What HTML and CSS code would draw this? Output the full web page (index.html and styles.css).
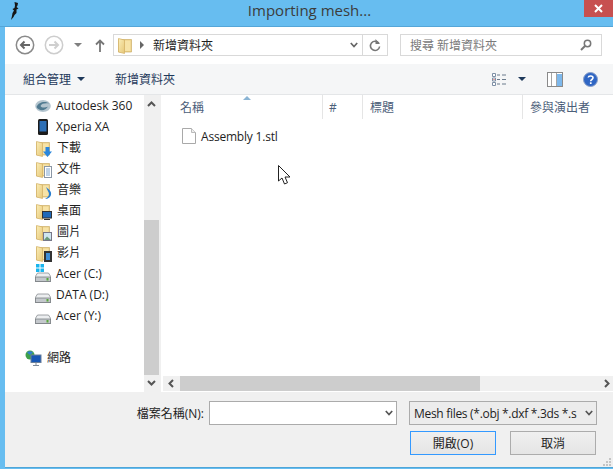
FILE: index.html
```html
<!DOCTYPE html>
<html lang="zh-Hant">
    <head>
        <meta charset="utf-8">
        <title>Importing mesh...</title>
        <link rel="stylesheet" href="styles.css">
    </head>
    <body>
        <svg class="defs" width="0" height="0">
            <defs>
                <linearGradient id="fold" x1="0" y1="0" x2="1" y2="1">
                    <stop offset="0" stop-color="#fbeeb8"/>
                    <stop offset="1" stop-color="#e6c777"/>
                </linearGradient>
                <symbol id="folder" viewBox="0 0 16 17">
                    <path d="M1.500 2.500H14.500V15H1.500z" fill="#eccf86" stroke="#cdaf68" stroke-width=".7"/>
                    <path d="M8 3.500h5.500V14H8z" fill="#f7e3a6"/>
                    <path d="M1.500 1.500 7.500 3V16.500L1.500 15z" fill="url(#fold)" stroke="#d2b066" stroke-width=".7"/>
                </symbol>
                <symbol id="drive" viewBox="0 0 16 10">
                    <path d="M2.500 1h11L16 5v4.500H0V5z" fill="#eceef0" stroke="#7b7f84" stroke-width=".7"/>
                    <path d="M.5 5h15v4.500H.5z" fill="#c4c8cc" stroke="#6f7377" stroke-width=".7"/>
                    <rect x="11.500" y="6" width="2" height="2.500" fill="#5aa83c"/>
                </symbol>
            </defs>
        </svg>
        <div class="window">
            <header class="titlebar">
                <svg class="app-icon" width="8" height="18" viewBox="0 0 8 18">
                    <path d="M3.500 0 7 1 6.500 3.500 5.500 5 7.500 6.500 5.500 7.500 5.500 11 3.500 13 2.500 15 0 18 1 14 1.500 11 3 8.500 1.500 7 3.500 6 4 3.500z" fill="#161616"/>
                </svg>
                <span class="title">Importing mesh...</span>
                <button class="close" type="button">
                    <svg width="9" height="9" viewBox="0 0 9 9"><path d="M1 1l7 7M8 1 1 8" stroke="#fff" stroke-width="2"/></svg>
                </button>
            </header>
            <div class="dialog">
                <div class="navbar">
                    <svg class="nav-back" width="20" height="20" viewBox="0 0 20 20">
                        <circle cx="10" cy="10" r="8.700" fill="#fff" stroke="#8a8a8a" stroke-width="1.500"/>
                        <path d="M15 10H6M9.500 6.500 6 10l3.500 3.500" fill="none" stroke="#666" stroke-width="2"/>
                    </svg>
                    <svg class="nav-forward" width="20" height="20" viewBox="0 0 20 20">
                        <circle cx="10" cy="10" r="8.700" fill="#fff" stroke="#cdcdcd" stroke-width="1.500"/>
                        <path d="M5 10h9M10.500 6.500 14 10l-3.500 3.500" fill="none" stroke="#cfcfcf" stroke-width="2"/>
                    </svg>
                    <span class="tri-grey"></span>
                    <svg class="nav-up" width="10" height="13" viewBox="0 0 10 13">
                        <path d="M5 13V2M1 5.500 5 1.500l4 4" fill="none" stroke="#777" stroke-width="1.800"/>
                    </svg>
                    <div class="address">
                        <svg class="addr-folder" width="16" height="17"><use href="#folder"/></svg>
                        <span class="tri-right"></span>
                        <span class="addr-text">新增資料夾</span>
                        <svg class="addr-chev" width="8" height="6" viewBox="0 0 8 6"><path d="M.8 1 4 4.500 7.200 1" fill="none" stroke="#666" stroke-width="1.700"/></svg>
                        <span class="refresh">
                            <svg width="12" height="13" viewBox="0 0 12 13">
                                <path d="M9.800 4.200A4.600 4.600 0 1 0 10.600 7.500" fill="none" stroke="#777" stroke-width="1.600"/>
                                <path d="M6.500 0v5h4.500z" fill="#777"/>
                            </svg>
                        </span>
                    </div>
                    <div class="search">
                        <span>搜尋 新增資料夾</span>
                        <svg width="12" height="12" viewBox="0 0 12 12">
                            <circle cx="7.500" cy="4.500" r="3.200" fill="none" stroke="#777" stroke-width="1.500"/>
                            <path d="M5 7 1 11" stroke="#777" stroke-width="2"/>
                        </svg>
                    </div>
                </div>
                <div class="commands">
                    <span class="cmd">組合管理<i class="tri-down"></i></span>
                    <span class="cmd cmd-new">新增資料夾</span>
                    <span class="spacer"></span>
                    <svg class="cmd-views" width="15" height="13" viewBox="0 0 15 13">
                        <path d="M.5.500h3v3h-3zM.5 5h3v3h-3zM.5 9.500h3v3h-3z" fill="#fff" stroke="#7d8fa5"/>
                        <path d="M5 2h3M10 2h4M5 6.500h3M10 6.500h4M5 11h3M10 11h4" stroke="#6a7a8c"/>
                        <path d="M1.500 6h1v1h-1z" fill="#d44"/>
                    </svg>
                    <i class="tri-down tri-views"></i>
                    <svg class="cmd-pane" width="16" height="15" viewBox="0 0 16 15">
                        <rect x=".5" y=".5" width="15" height="14" fill="#fff" stroke="#8a8a8a"/>
                        <rect x="10" y="2" width="5" height="12" fill="#7db8ec"/>
                        <path d="M4.500 1v13M9.500 1v13" stroke="#a5a5a5"/>
                    </svg>
                    <svg class="cmd-help" width="15" height="15" viewBox="0 0 15 15">
                        <circle cx="7.500" cy="7.500" r="7" fill="#2f66c4" stroke="#8aa0c8"/>
                        <path d="M5.200 5.500C5.500 3.500 10 3.400 10 5.800 10 7.500 7.700 7.500 7.700 9.300" fill="none" stroke="#fff" stroke-width="1.600"/>
                        <rect x="6.900" y="10.300" width="1.700" height="1.700" fill="#fff"/>
                    </svg>
                </div>
                <div class="panes">
                    <nav class="tree">
                        <div class="tree-list">
                            <div class="row">
                                <svg width="16" height="14" viewBox="0 0 16 14">
                                    <ellipse cx="8" cy="7" rx="7.800" ry="6" fill="#b4c5cf"/>
                                    <path d="M1.500 8C4 2 11 2 14.500 4.500 10 4 6.500 4.500 5.500 7 7 9.500 10.500 8.500 13 7.500 10.500 12 4 12.500 1.500 8z" fill="#507a90"/>
                                </svg>
                                <span>Autodesk 360</span>
                            </div>
                            <div class="row">
                                <svg width="16" height="16" viewBox="0 0 16 16">
                                    <rect x="3" y="0" width="10" height="16" rx="1.500" fill="#1c1c1c"/>
                                    <rect x="4.500" y="2" width="7" height="10.500" fill="#2d6fb5"/>
                                </svg>
                                <span>Xperia XA</span>
                            </div>
                            <div class="row">
                                <span class="badge-wrap">
                                    <svg width="16" height="17"><use href="#folder"/></svg>
                                    <svg class="badge" width="9" height="10" viewBox="0 0 9 10"><path d="M2.500 0h4v4.500H9L4.500 10 0 4.500h2.500z" fill="#2a86dc"/></svg>
                                </span>
                                <span class="cjk">下載</span>
                            </div>
                            <div class="row">
                                <span class="badge-wrap">
                                    <svg width="16" height="17"><use href="#folder"/></svg>
                                    <svg class="badge" width="8" height="12" viewBox="0 0 8 12"><rect x=".5" y=".5" width="7" height="11" fill="#fff" stroke="#8b97a5"/><path d="M2 3h4M2 5h4M2 7h4M2 9h4" stroke="#7fa6cf"/></svg>
                                </span>
                                <span class="cjk">文件</span>
                            </div>
                            <div class="row">
                                <span class="badge-wrap">
                                    <svg width="16" height="17"><use href="#folder"/></svg>
                                    <svg class="badge" width="7" height="12" viewBox="0 0 7 12"><path d="M1 0C3 2 7 4 6 8 5.500 10 3 12 0 12 3 10 4 9 4 7 4 5 2 3 1 0z" fill="#2a7fd0"/></svg>
                                </span>
                                <span class="cjk">音樂</span>
                            </div>
                            <div class="row">
                                <span class="badge-wrap">
                                    <svg width="16" height="17"><use href="#folder"/></svg>
                                    <svg class="badge" width="10" height="9" viewBox="0 0 10 9"><rect x=".5" y=".5" width="9" height="6.500" fill="#1f69b8" stroke="#333"/><path d="M2 8.500h6" stroke="#333"/></svg>
                                </span>
                                <span class="cjk">桌面</span>
                            </div>
                            <div class="row">
                                <span class="badge-wrap">
                                    <svg width="16" height="17"><use href="#folder"/></svg>
                                    <svg class="badge" width="9" height="9" viewBox="0 0 9 9"><rect x=".5" y=".5" width="8" height="8" fill="#cfe6f0" stroke="#778"/><path d="M1 8 4 4.500 8 8z" fill="#6a9a7a"/></svg>
                                </span>
                                <span class="cjk">圖片</span>
                            </div>
                            <div class="row">
                                <span class="badge-wrap">
                                    <svg width="16" height="17"><use href="#folder"/></svg>
                                    <svg class="badge" width="8" height="11" viewBox="0 0 8 11"><rect width="8" height="11" fill="#333"/><rect x="2" y="2" width="4" height="7" fill="#3f8fd8"/></svg>
                                </span>
                                <span class="cjk">影片</span>
                            </div>
                            <div class="row">
                                <span class="badge-wrap">
                                    <svg class="drive-low" width="16" height="10"><use href="#drive"/></svg>
                                    <svg class="win" width="8" height="8" viewBox="0 0 8 8"><path d="M0 0h3.500v3.500H0zM4.500 0H8v3.500H4.500zM0 4.500h3.500V8H0zM4.500 4.500H8V8H4.500z" fill="#19b5ee"/></svg>
                                </span>
                                <span>Acer (C:)</span>
                            </div>
                            <div class="row">
                                <svg class="drive-low" width="16" height="10"><use href="#drive"/></svg>
                                <span>DATA (D:)</span>
                            </div>
                            <div class="row">
                                <svg class="drive-low" width="16" height="10"><use href="#drive"/></svg>
                                <span>Acer (Y:)</span>
                            </div>
                            <div class="row row-network">
                                <svg width="17" height="16" viewBox="0 0 17 16">
                                    <circle cx="5" cy="5" r="4.500" fill="#3fa04a"/>
                                    <path d="M2 2.500a4.500 4.500 0 0 1 6 0L5 5z" fill="#2f7fd0"/>
                                    <rect x="6" y="5" width="10" height="7.500" fill="#1757b5" stroke="#6a7f9a"/>
                                    <path d="M11 12.500V15M8 15.500h6" stroke="#7f8a99"/>
                                </svg>
                                <span class="cjk">網路</span>
                            </div>
                        </div>
                        <div class="vscroll">
                            <svg width="9" height="6" viewBox="0 0 9 6"><path d="M1 5 4.500 1.500 8 5" fill="none" stroke="#555" stroke-width="2"/></svg>
                            <span class="v-space"></span>
                            <span class="v-thumb"></span>
                            <svg width="9" height="6" viewBox="0 0 9 6"><path d="M1 1 4.500 4.500 8 1" fill="none" stroke="#555" stroke-width="2"/></svg>
                        </div>
                    </nav>
                    <main class="files">
                        <div class="columns">
                            <span class="col col-name">名稱<i class="sort"></i></span>
                            <span class="col col-num">#</span>
                            <span class="col col-title">標題</span>
                            <span class="col col-artist">參與演出者</span>
                        </div>
                        <div class="file-list">
                            <div class="file">
                                <svg width="14" height="16" viewBox="0 0 14 16">
                                    <path d="M.5.500H9.500L13.500 4.500V15.500H.5z" fill="#fff" stroke="#a9a9a9"/>
                                    <path d="M9.500.500V4.500H13.500" fill="#eee" stroke="#bbb"/>
                                </svg>
                                <span class="file-name">Assembly 1.stl</span>
                            </div>
                        </div>
                        <div class="hscroll">
                            <svg class="h-left" width="6" height="9" viewBox="0 0 6 9"><path d="M5 1 1.500 4.500 5 8" fill="none" stroke="#555" stroke-width="2"/></svg>
                            <span class="h-thumb"></span>
                            <svg class="h-right" width="6" height="9" viewBox="0 0 6 9"><path d="M1 1 4.500 4.500 1 8" fill="none" stroke="#555" stroke-width="2"/></svg>
                        </div>
                    </main>
                </div>
                <footer class="bottom">
                    <div class="name-row">
                        <label class="name-label">檔案名稱(N):</label>
                        <div class="combo">
                            <svg width="8" height="6" viewBox="0 0 8 6"><path d="M.8 1 4 4.500 7.200 1" fill="none" stroke="#555" stroke-width="1.700"/></svg>
                        </div>
                        <div class="filter">
                            <span class="filter-text">Mesh files (*.obj *.dxf *.3ds *.s</span>
                            <svg width="8" height="6" viewBox="0 0 8 6"><path d="M.8 1 4 4.500 7.200 1" fill="none" stroke="#555" stroke-width="1.700"/></svg>
                        </div>
                    </div>
                    <div class="button-row">
                        <button class="btn btn-default" type="button">開啟(O)</button>
                        <button class="btn" type="button">取消</button>
                    </div>
                    <svg class="grip" width="10" height="10" viewBox="0 0 10 10">
                        <path d="M7 1h2v2H7zM4 4h2v2H4zM7 4h2v2H7zM1 7h2v2H1zM4 7h2v2H4zM7 7h2v2H7z" fill="#c4c4c4"/>
                    </svg>
                </footer>
            </div>
            <svg class="cursor" width="13" height="20" viewBox="0 0 13 20">
                <path d="M.5.500V16L4 13l2.500 6 3-1.300L7 12h5z" fill="#fff" stroke="#222"/>
            </svg>
        </div>
    </body>
</html>
```

FILE: styles.css
```css
* {
    box-sizing: border-box;
}
body {
    margin: 0;
    font-family: "Open Sans", "Noto Sans CJK TC", sans-serif;
    font-size: 12px;
    color: #1e1e1e;
}
.defs {
    position: absolute;
}
.window {
    position: relative;
    width: 613px;
    height: 469px;
    display: flex;
    flex-direction: column;
    background: #67bdf0;
    padding: 0 0 1px 5px;
    overflow: hidden;
}
.titlebar {
    height: 27px;
    margin-left: -5px;
    padding-left: 6px;
    flex: none;
    display: flex;
    align-items: flex-start;
    justify-content: center;
    position: relative;
    border-bottom: 1px solid #55a6d8;
}
.app-icon {
    position: absolute;
    left: 11px;
    top: 2px;
}
.title {
    font-size: 15px;
    line-height: 21px;
    color: #3c3c3c;
}
.close {
    position: absolute;
    right: 0;
    top: 0;
    width: 29px;
    height: 17px;
    border: 0;
    padding: 0;
    background: #c75050;
    display: flex;
    align-items: center;
    justify-content: center;
}
.dialog {
    flex: 1;
    min-height: 0;
    display: flex;
    flex-direction: column;
    background: #f0f0f0;
    border-bottom: 1px solid #4fa6d8;
}

/* address + search */
.navbar {
    height: 37px;
    flex: none;
    background: #fff;
    display: flex;
    align-items: center;
    padding: 0 0 1px 10px;
}
.nav-forward {
    margin-left: 9px;
}
.tri-grey {
    margin-left: 10px;
    border: 4px solid transparent;
    border-top-color: #808080;
    border-bottom: 0;
}
.nav-up {
    margin-left: 13px;
}
.address {
    margin-left: 8px;
    width: 275px;
    height: 22px;
    display: flex;
    align-items: center;
    border: 1px solid #d9d9d9;
    padding-left: 3px;
}
.addr-folder {
    flex: none;
}
.tri-right {
    margin-left: 7px;
    border: 4px solid transparent;
    border-left-color: #666;
    border-right: 0;
}
.addr-text {
    margin-left: 9px;
    flex: 1;
}
.addr-chev {
    margin-right: 4px;
}
.refresh {
    width: 25px;
    height: 20px;
    border-left: 1px solid #d9d9d9;
    display: flex;
    align-items: center;
    justify-content: center;
}
.search {
    margin-left: 12px;
    width: 202px;
    height: 22px;
    border: 1px solid #d9d9d9;
    display: flex;
    align-items: center;
    justify-content: space-between;
    padding: 0 9px;
    color: #7a7a7a;
}

/* command bar */
.commands {
    height: 31px;
    flex: none;
    background: #f5f6f7;
    border-bottom: 1px solid #e4e6e8;
    display: flex;
    align-items: center;
    padding-right: 15px;
}
.cmd {
    margin-left: 18px;
    color: #1e395b;
    display: flex;
    align-items: center;
}
.cmd-new {
    margin-left: 30px;
}
.tri-down {
    margin-left: 6px;
    border: 4px solid transparent;
    border-top: 4px solid #1e395b;
    border-bottom: 0;
}
.spacer {
    flex: 1;
}
.tri-views {
    margin-left: 11px;
}
.cmd-pane {
    margin-left: 21px;
}
.cmd-help {
    margin-left: 20px;
}

/* left tree */
.panes {
    height: 297px;
    flex: none;
    display: flex;
    background: #fff;
}
.tree {
    width: 156px;
    flex: none;
    display: flex;
    border-right: 2px solid #f0f0f0;
}
.tree-list {
    flex: 1;
    padding-left: 30px;
}
.row {
    height: 21px;
    display: flex;
    align-items: center;
    gap: 5px;
    white-space: nowrap;
}
.row svg {
    flex: none;
}
.row .cjk {
    margin: 0 0 2px 1px;
}
.row-network {
    margin: 21px 0 0 -10px;
}
.row-network .cjk {
    margin-left: 0;
}
.badge-wrap {
    position: relative;
    width: 16px;
    height: 16px;
    display: block;
    flex: none;
}
.badge {
    position: absolute;
    right: -1px;
    bottom: -1px;
}
.win {
    position: absolute;
    left: 1px;
    top: -2px;
}
.drive-low {
    display: block;
    margin-top: 6px;
}
.vscroll {
    width: 15px;
    flex: none;
    background: #f0f0f0;
    display: flex;
    flex-direction: column;
    align-items: center;
    padding: 6px 0;
}
.v-space {
    height: 113px;
}
.v-thumb {
    flex: 1;
    align-self: stretch;
    background: #cdcdcd;
    margin-bottom: 5px;
}

/* file list */
.files {
    flex: 1;
    min-width: 0;
    display: flex;
    flex-direction: column;
}
.columns {
    height: 24px;
    flex: none;
    display: flex;
    color: #4c607a;
    line-height: 25px;
}
.col {
    position: relative;
    border-right: 1px solid #e5e5e5;
    white-space: nowrap;
}
.col-name {
    width: 162px;
    padding-left: 19px;
}
.col-num {
    width: 40px;
    padding-left: 6px;
}
.col-title {
    width: 160px;
    padding-left: 7px;
}
.col-artist {
    flex: 1;
    padding-left: 7px;
    border-right: 0;
}
.sort {
    position: absolute;
    left: 82px;
    top: 1px;
    border: 4px solid transparent;
    border-bottom-color: #8ab4d4;
    border-top: 0;
}
.file-list {
    flex: 1;
    padding: 8px 0 0 21px;
}
.file {
    display: flex;
    align-items: center;
    gap: 5px;
    height: 18px;
    white-space: nowrap;
}
.file-name {
    letter-spacing: -.2px;
}
.hscroll {
    height: 15px;
    flex: none;
    margin: 0 0 1px 2px;
    background: #f0f0f0;
    display: flex;
    align-items: center;
    padding-right: 3px;
}
.h-left {
    margin: 0 6px 0 5px;
}
.h-thumb {
    width: 300px;
    height: 15px;
    background: #cdcdcd;
}
.h-right {
    margin-left: auto;
}

/* bottom panel */
.bottom {
    flex: 1;
    position: relative;
    padding: 9px 16px 0 0;
}
.name-row {
    display: flex;
    align-items: center;
    height: 24px;
}
.name-label {
    width: 199px;
    text-align: right;
    white-space: nowrap;
}
.combo {
    margin-left: 5px;
    width: 188px;
    height: 24px;
    background: #fff;
    border: 1px solid #ababab;
    display: flex;
    align-items: center;
    justify-content: flex-end;
    padding-right: 3px;
}
.filter {
    margin-left: 12px;
    width: 188px;
    height: 24px;
    background: #ececec;
    border: 1px solid #ababab;
    display: flex;
    align-items: center;
    justify-content: space-between;
    padding: 0 3px 0 4px;
}
.filter-text {
    white-space: nowrap;
    letter-spacing: -.3px;
}
.button-row {
    display: flex;
    justify-content: flex-end;
    gap: 14px;
    margin-top: 6px;
    padding-right: 1px;
}
.btn {
    width: 86px;
    height: 24px;
    padding: 0;
    border: 1px solid #acacac;
    background: linear-gradient(#f0f0f0, #e5e5e5);
    font: inherit;
    color: #1e1e1e;
}
.btn-default {
    border: 1px solid #3399ff;
}
.grip {
    position: absolute;
    right: 1px;
    bottom: 0;
}
.cursor {
    position: absolute;
    left: 278px;
    top: 165px;
}
```
